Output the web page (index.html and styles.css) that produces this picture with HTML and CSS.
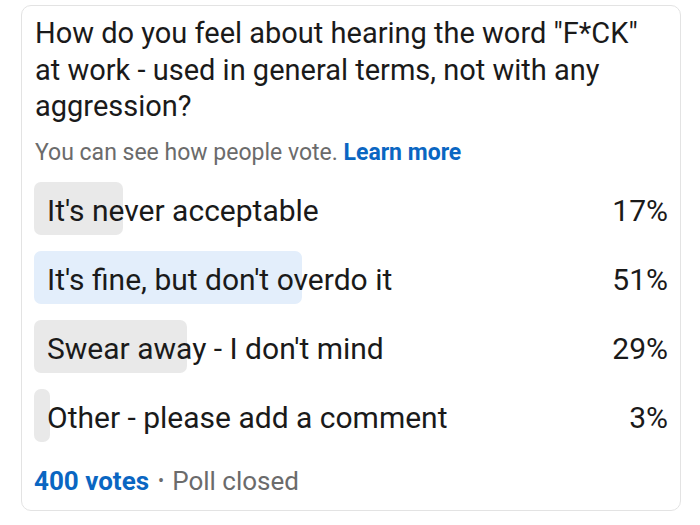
FILE: index.html
```html
<!DOCTYPE html>
<html>
<head>
<meta charset="utf-8">
<link rel="stylesheet" href="styles.css">
</head>
<body>
<div class="card">
  <h1 class="title">How do you feel about hearing the word "F*CK" at work - used in general terms, not with any aggression?</h1>
  <p class="sub">You can see how people vote. <a class="link">Learn more</a></p>
  <div class="options">
    <div class="row">
      <div class="track"><div class="bar" style="width:17%"></div><span class="label">It's never acceptable</span></div>
      <span class="pct">17%</span>
    </div>
    <div class="row">
      <div class="track"><div class="bar bar-top" style="width:51%"></div><span class="label">It's fine, but don't overdo it</span></div>
      <span class="pct">51%</span>
    </div>
    <div class="row">
      <div class="track"><div class="bar" style="width:29%"></div><span class="label">Swear away - I don't mind</span></div>
      <span class="pct">29%</span>
    </div>
    <div class="row">
      <div class="track"><div class="bar" style="width:3%"></div><span class="label">Other - please add a comment</span></div>
      <span class="pct">3%</span>
    </div>
  </div>
  <p class="foot"><span class="votes">400 votes</span><span class="dot">•</span>Poll closed</p>
</div>
</body>
</html>
```
FILE: styles.css
```css
html, body {
  margin: 0;
  padding: 0;
  background: #ffffff;
}
body {
  font-family: Roboto, "Noto Sans", sans-serif;
  color: #1a1a1a;
  padding: 5px 0 0 21px;
}
.card {
  box-sizing: border-box;
  width: 660px;
  height: 506px;
  border: 1px solid #e3e3e3;
  border-radius: 10px;
  padding: 9px 12px 0 12px;
}
.title {
  margin: 0 0 0 1px;
  font-size: 29px;
  font-weight: 400;
  line-height: 36.5px;
  color: #1a1a1a;
}
.sub {
  margin: 14px 0 0 1px;
  font-size: 23px;
  line-height: 28px;
  color: #6b6b6b;
}
.link {
  color: #0a66c2;
  font-weight: 700;
}
.options {
  margin-top: 15px;
  display: flex;
  flex-direction: column;
  gap: 16px;
}
.row {
  display: grid;
  grid-template-columns: 1fr 96px;
  column-gap: 12px;
  align-items: center;
}
.track {
  display: grid;
  align-items: center;
  height: 53px;
}
.bar {
  grid-area: 1 / 1;
  height: 53px;
  border-radius: 7px;
  background: #e9e9e9;
}
.bar-top {
  background: #e3eefb;
}
.label {
  grid-area: 1 / 1;
  padding-left: 13px;
  padding-top: 4px;
  font-size: 30px;
  white-space: nowrap;
  color: #1a1a1a;
}
.pct {
  text-align: right;
  padding-top: 4px;
  font-size: 30px;
  color: #1a1a1a;
}
.foot {
  margin: 23px 0 0 0;
  font-size: 26px;
  line-height: 32px;
  color: #6b6b6b;
}
.votes {
  color: #0a66c2;
  font-weight: 700;
}
.dot {
  display: inline-block;
  margin: 0 8px 0 9px;
  font-size: 18px;
  vertical-align: 3px;
}
```
